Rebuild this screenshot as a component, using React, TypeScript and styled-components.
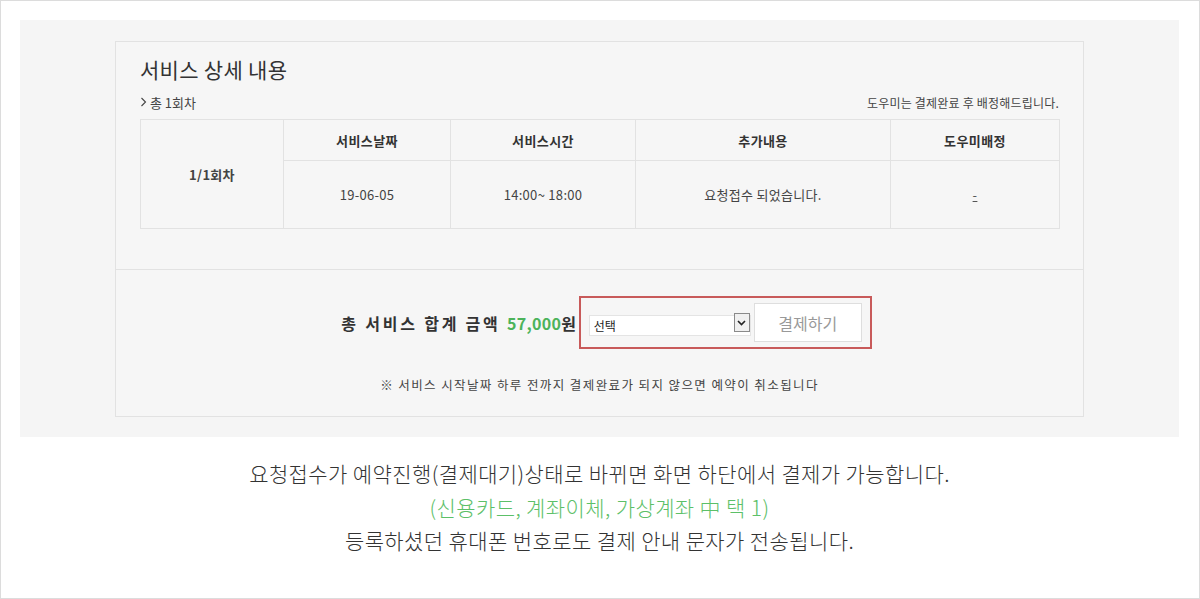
import React from 'react';
import styled, { createGlobalStyle } from 'styled-components';

const GlobalStyle = createGlobalStyle`
  html, body {
    margin: 0;
    padding: 0;
    background: #fff;
  }
  body {
    font-family: "Noto Sans CJK KR", "Noto Sans", sans-serif;
    color: #333;
  }
`;

const Page = styled.div`
  width: 1200px;
  height: 599px;
  box-sizing: border-box;
  border: 1px solid #dcdcdc;
  padding: 19px 20px 0 19px;
`;

const Panel = styled.section`
  background: #f5f5f5;
  height: 417px;
  box-sizing: border-box;
  padding-top: 21px;
`;

const Card = styled.div`
  width: 969px;
  margin-left: 95px;
  box-sizing: border-box;
  border: 1px solid #e2e2e2;
  background: #f6f6f6;
`;

const TopSection = styled.div`
  padding: 13px 24px 40px 24px;
  border-bottom: 1px solid #e2e2e2;
`;

const Title = styled.h2`
  margin: 0;
  font-size: 21px;
  line-height: 28px;
  font-weight: 400;
  color: #333;
  letter-spacing: 0.3px;
`;

const SubRow = styled.div`
  margin-top: 10px;
  display: flex;
  justify-content: space-between;
  align-items: center;
  height: 18px;
`;

const Count = styled.div`
  font-size: 13px;
  color: #444;
  display: flex;
  align-items: center;
  gap: 3px;
`;

const Notice = styled.div`
  font-size: 12px;
  color: #444;
  letter-spacing: 0.2px;
`;

const Table = styled.table`
  margin-top: 8px;
  width: 919px;
  border-collapse: collapse;
  table-layout: fixed;
  background: #f6f6f6;
`;

const Th = styled.th`
  height: 40px;
  border: 1px solid #e2e2e2;
  font-size: 13px;
  font-weight: 700;
  color: #333;
  text-align: center;
  letter-spacing: 0.4px;
  padding: 0;
`;

const Td = styled.td<{ $bold?: boolean }>`
  height: 67px;
  border: 1px solid #e2e2e2;
  font-size: 13px;
  font-weight: ${(p) => (p.$bold ? 700 : 400)};
  color: #444;
  text-align: center;
  letter-spacing: 0.3px;
  padding: 0;
`;

const Dash = styled.span`
  text-decoration: underline;
  color: #555;
`;

const BottomSection = styled.div`
  padding: 26px 0 22px;
  display: flex;
  flex-direction: column;
  align-items: center;
`;

const TotalRow = styled.div`
  display: flex;
  align-items: center;
  margin-left: 14px;
`;

const TotalLabel = styled.div`
  font-size: 16px;
  font-weight: 700;
  color: #333;
  letter-spacing: 2.8px;
  margin-right: 0;
`;

const Price = styled.span`
  color: #4cb35a;
  letter-spacing: 0.3px;
`;

const PayBox = styled.div`
  display: flex;
  align-items: center;
  gap: 3px;
  border: 2px solid #c85a5a;
  padding: 5px 8px;
`;

const SelectWrap = styled.div`
  position: relative;
  width: 162px;
  height: 21px;
`;

const Select = styled.select`
  appearance: none;
  width: 100%;
  height: 100%;
  box-sizing: border-box;
  border: 1px solid #e4e4e4;
  background: #fff;
  font-family: "Noto Sans CJK KR", sans-serif;
  font-size: 12px;
  color: #222;
  padding: 0 4px;
  outline: none;
`;

const ArrowBox = styled.span`
  position: absolute;
  right: 1px;
  top: 1px;
  width: 14px;
  height: 17px;
  border: 1px solid #8a8a8a;
  background: #f0f0f0;
  display: flex;
  align-items: center;
  justify-content: center;
  pointer-events: none;
`;

const PayButton = styled.button`
  width: 108px;
  height: 39px;
  border: 1px solid #dedede;
  background: #fff;
  font-family: "Noto Sans CJK KR", sans-serif;
  font-size: 16px;
  color: #999;
  cursor: pointer;
`;

const Warn = styled.p`
  margin: 27px 0 0;
  font-size: 12.5px;
  line-height: 18px;
  color: #444;
  letter-spacing: 1.4px;
`;

const Guide = styled.div`
  padding-top: 20px;
  text-align: center;
  font-size: 21px;
  line-height: 33.5px;
  font-weight: 300;
  color: #333;
  letter-spacing: 0.4px;
`;

const GuideLine = styled.div<{ $green?: boolean }>`
  color: ${(p) => (p.$green ? '#5cc068' : '#333')};
`;

const App: React.FC = () => {
  return (
    <>
      <GlobalStyle />
      <Page>
        <Panel>
          <Card>
            <TopSection>
              <Title>서비스 상세 내용</Title>
              <SubRow>
                <Count>
                  <svg width="7" height="10" viewBox="0 0 7 10">
                    <path d="M1.5 1 L5.5 5 L1.5 9" fill="none" stroke="#444" strokeWidth="1.1" />
                  </svg>
                  총 1회차
                </Count>
                <Notice>도우미는 결제완료 후 배정해드립니다.</Notice>
              </SubRow>
              <Table>
                <colgroup>
                  <col style={{ width: 143 }} />
                  <col style={{ width: 167 }} />
                  <col style={{ width: 185 }} />
                  <col style={{ width: 255 }} />
                  <col style={{ width: 169 }} />
                </colgroup>
                <tbody>
                  <tr>
                    <Td $bold rowSpan={2}>1/1회차</Td>
                    <Th>서비스날짜</Th>
                    <Th>서비스시간</Th>
                    <Th>추가내용</Th>
                    <Th>도우미배정</Th>
                  </tr>
                  <tr>
                    <Td>19-06-05</Td>
                    <Td>14:00~ 18:00</Td>
                    <Td>요청접수 되었습니다.</Td>
                    <Td>
                      <Dash>-</Dash>
                    </Td>
                  </tr>
                </tbody>
              </Table>
            </TopSection>
            <BottomSection>
              <TotalRow>
                <TotalLabel>
                  총 서비스 합계 금액 <Price>57,000</Price>원
                </TotalLabel>
                <PayBox>
                  <SelectWrap>
                    <Select defaultValue="">
                      <option value="">선택</option>
                      <option value="card">신용카드</option>
                      <option value="bank">계좌이체</option>
                      <option value="virtual">가상계좌</option>
                    </Select>
                    <ArrowBox>
                      <svg width="9" height="6" viewBox="0 0 9 6">
                        <path d="M1 1 L4.5 4.5 L8 1" fill="none" stroke="#222" strokeWidth="1.6" />
                      </svg>
                    </ArrowBox>
                  </SelectWrap>
                  <PayButton>결제하기</PayButton>
                </PayBox>
              </TotalRow>
              <Warn>※ 서비스 시작날짜 하루 전까지 결제완료가 되지 않으면 예약이 취소됩니다</Warn>
            </BottomSection>
          </Card>
        </Panel>
        <Guide>
          <GuideLine>요청접수가 예약진행(결제대기)상태로 바뀌면 화면 하단에서 결제가 가능합니다.</GuideLine>
          <GuideLine $green>(신용카드, 계좌이체, 가상계좌 中 택 1)</GuideLine>
          <GuideLine>등록하셨던 휴대폰 번호로도 결제 안내 문자가 전송됩니다.</GuideLine>
        </Guide>
      </Page>
    </>
  );
};

export default App;
